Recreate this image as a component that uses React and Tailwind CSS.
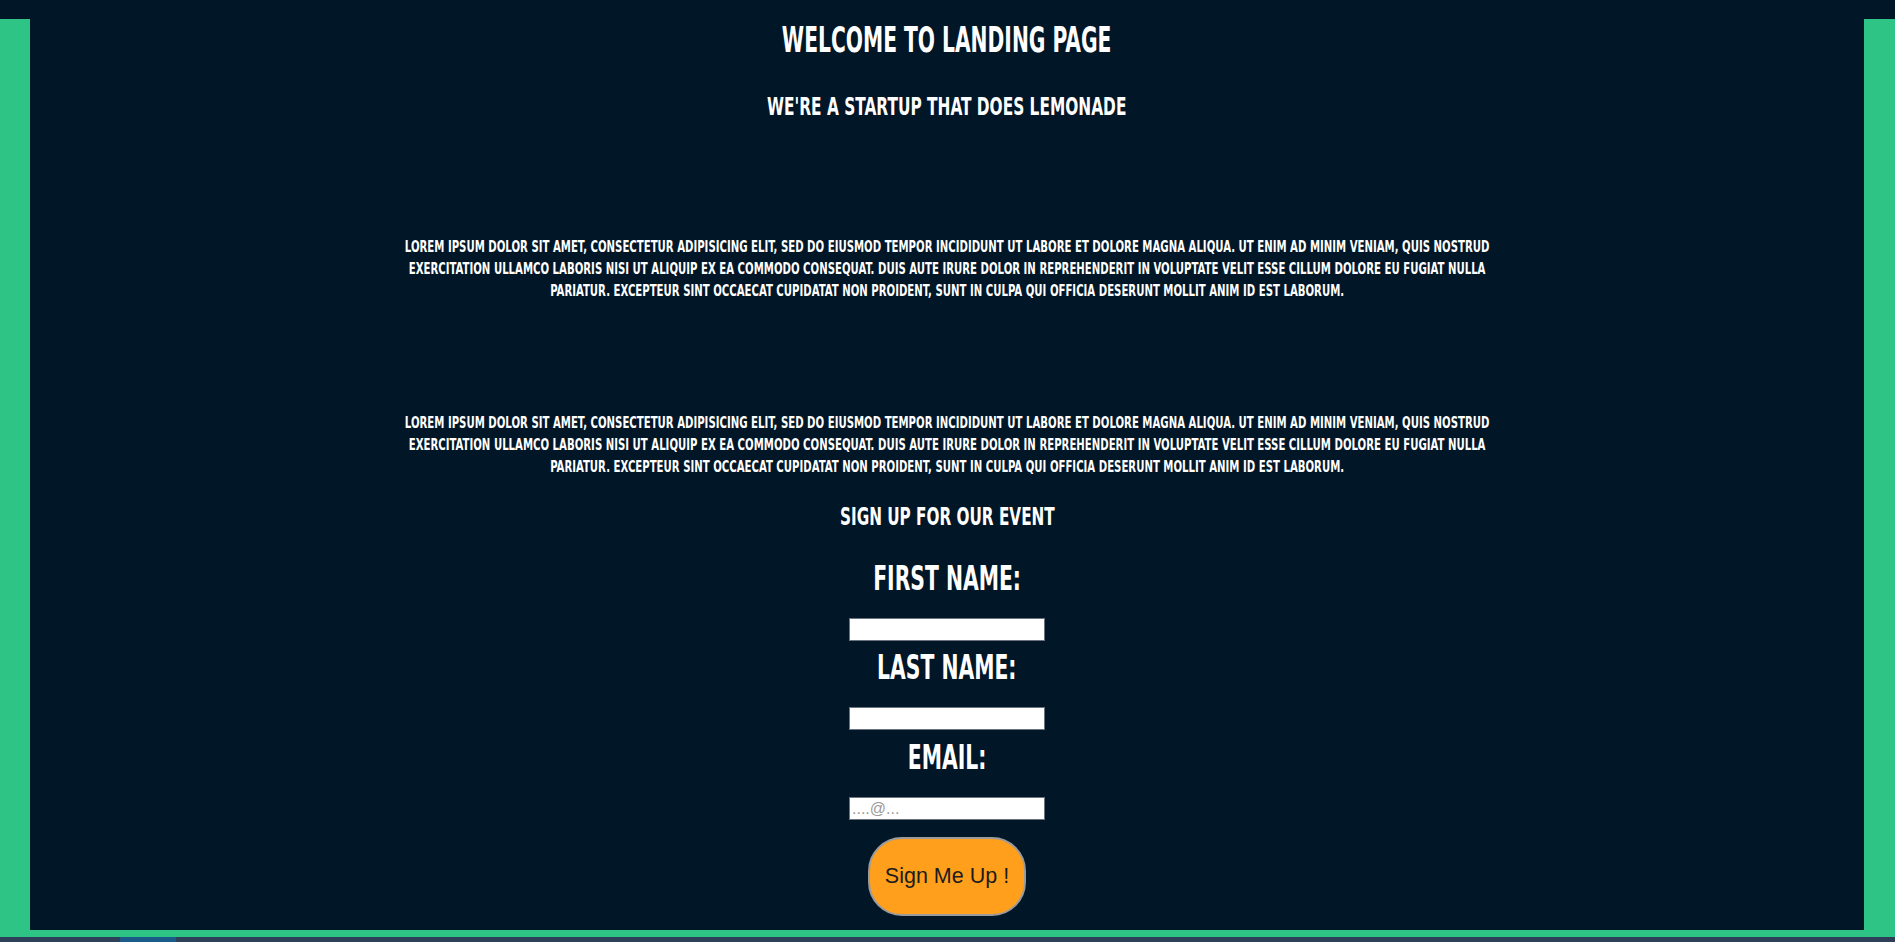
import React from "react";

const display = { fontFamily: '"DejaVu Sans Condensed", "DejaVu Sans", sans-serif' };

function Para() {
  return (
    <p className="mx-auto w-max scale-x-[0.752] text-center text-[15px] leading-[22px] font-bold uppercase text-white" style={display}>
      Lorem ipsum dolor sit amet, consectetur adipisicing elit, sed do eiusmod tempor incididunt ut labore et dolore magna aliqua. Ut enim ad minim veniam, quis nostrud
      <br />
      exercitation ullamco laboris nisi ut aliquip ex ea commodo consequat. Duis aute irure dolor in reprehenderit in voluptate velit esse cillum dolore eu fugiat nulla
      <br />
      pariatur. Excepteur sint occaecat cupidatat non proident, sunt in culpa qui officia deserunt mollit anim id est laborum.
    </p>
  );
}

function Field({ label, placeholder, mt }) {
  return (
    <>
      <label className={`block w-max scale-x-[0.665] text-center text-[34px] leading-[34px] font-bold uppercase text-white ${mt}`} style={display}>
        {label}
      </label>
      <input
        type="text"
        placeholder={placeholder}
        className="block mx-auto mt-[23px] w-[196px] h-[23px] bg-white border border-[#6b7280] px-[2px] text-[16px] text-black placeholder:text-[#9a9a9a] outline-none"
        style={{ fontFamily: '"Liberation Sans", Arial, sans-serif' }}
      />
    </>
  );
}

export default function App() {
  return (
    <div className="w-[1895px] h-[942px] overflow-hidden bg-[#011627] flex flex-col">
      <div className="grid grid-cols-[30px_1fr_31px] h-[930px]">
        <div className="mt-[19px] bg-[#2ec486]" />
        <main className="bg-[#011627] flex flex-col items-center">
          <h1 className="mt-[22px] w-max scale-x-[0.625] text-[36px] leading-[36px] font-bold uppercase text-white" style={display}>
            Welcome to Landing Page
          </h1>
          <h2 className="mt-[36px] w-max scale-x-[0.684] text-[25px] leading-[25px] font-bold uppercase text-white" style={display}>
            We&apos;re a startup that does lemonade
          </h2>
          <div className="mt-[117px]">
            <Para />
          </div>
          <div className="mt-[110px]">
            <Para />
          </div>
          <h3 className="mt-[26px] w-max scale-x-[0.678] text-[25px] leading-[25px] font-bold uppercase text-white" style={display}>
            Sign up for our event
          </h3>
          <form className="flex flex-col items-center">
            <Field label="First Name:" mt="mt-[32px]" />
            <Field label="Last Name:" mt="mt-[9px]" />
            <Field label="Email:" placeholder="....@..." mt="mt-[10px]" />
            <button
              type="button"
              className="mt-[17px] w-[158px] h-[79px] rounded-[34px] bg-[#ff9f1c] border-2 border-[#9b9b9b] text-[21.5px] text-[#1c1c1c]"
              style={{ fontFamily: '"Liberation Sans", Arial, sans-serif' }}
            >
              Sign Me Up !
            </button>
          </form>
        </main>
        <div className="mt-[19px] bg-[#2ec486]" />
      </div>
      <div className="h-[7px] bg-[#2ec486]" />
      <div className="h-[5px] bg-[#2e4057] flex">
        <div className="ml-[120px] w-[56px] bg-[#1a5b8a]" />
      </div>
    </div>
  );
}
